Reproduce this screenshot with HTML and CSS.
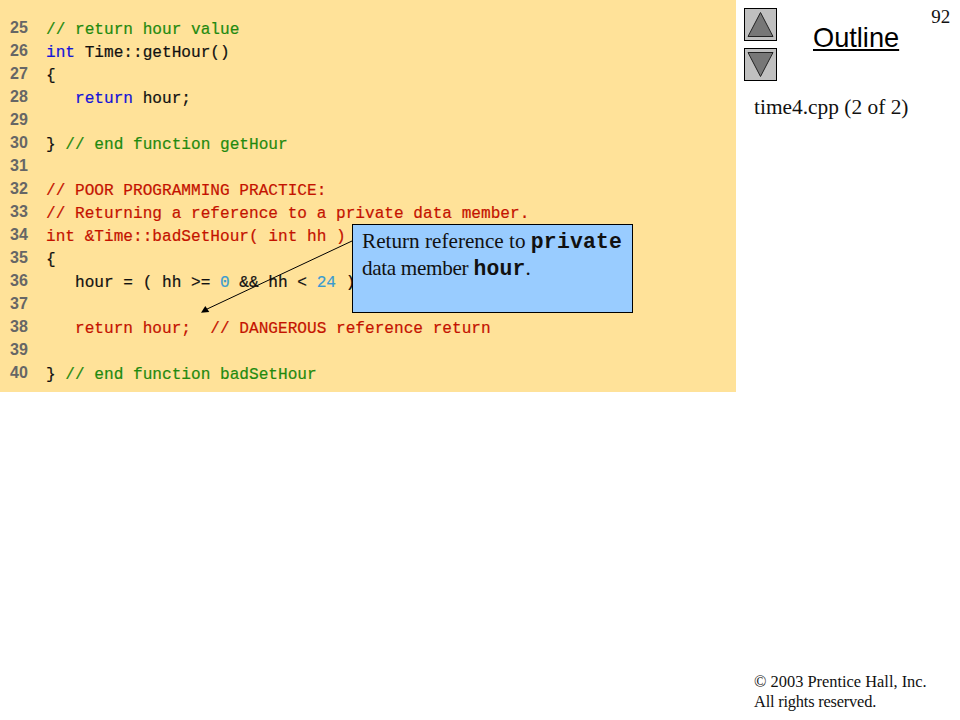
FILE: index.html
```html
<!DOCTYPE html>
<html lang="en">
<head>
<meta charset="utf-8">
<title>time4.cpp (2 of 2)</title>
<link rel="stylesheet" href="styles.css">
</head>
<body>
<div class="slide">
  <main class="panel">
    <div class="line"><span class="num">25</span><code class="c g">// return hour value</code></div>
    <div class="line"><span class="num">26</span><code class="c"><span class="b">int</span> Time::getHour()</code></div>
    <div class="line"><span class="num">27</span><code class="c">{</code></div>
    <div class="line"><span class="num">28</span><code class="c">   <span class="b">return</span> hour;</code></div>
    <div class="line"><span class="num">29</span><code class="c"></code></div>
    <div class="line"><span class="num">30</span><code class="c">} <span class="g">// end function getHour</span></code></div>
    <div class="line"><span class="num">31</span><code class="c"></code></div>
    <div class="line"><span class="num">32</span><code class="c r">// POOR PROGRAMMING PRACTICE:</code></div>
    <div class="line"><span class="num">33</span><code class="c r">// Returning a reference to a private data member.</code></div>
    <div class="line"><span class="num">34</span><code class="c r">int &amp;Time::badSetHour( int hh )</code></div>
    <div class="line"><span class="num">35</span><code class="c">{</code></div>
    <div class="line"><span class="num">36</span><code class="c">   hour = ( hh &gt;= <span class="n">0</span> &amp;&amp; hh &lt; <span class="n">24</span> )</code></div>
    <div class="line"><span class="num">37</span><code class="c"></code></div>
    <div class="line"><span class="num">38</span><code class="c r">   return hour;  // DANGEROUS reference return</code></div>
    <div class="line"><span class="num">39</span><code class="c"></code></div>
    <div class="line"><span class="num">40</span><code class="c">} <span class="g">// end function badSetHour</span></code></div>
    <svg class="arrow" width="160" height="80" viewBox="0 0 160 80" aria-hidden="true">
      <line x1="157" y1="3" x2="10" y2="72" stroke="#000" stroke-width="1"/>
      <polygon points="6,74.7 10.3,68 14.3,74" fill="#000"/>
    </svg>
    <aside class="callout">Return reference to <b class="m">private</b><br><span class="tight">data member</span> <b class="m">hour</b>.</aside>
  </main>
  <section class="side">
    <div class="top">
      <div class="nav">
        <svg class="btn" width="33" height="33" viewBox="0 0 33 33" aria-hidden="true">
          <rect x="0.5" y="0.5" width="32" height="32" fill="#c0c0c0" stroke="#000"/>
          <polygon points="16.5,4.5 29,28.5 4,28.5" fill="#777" stroke="#222"/>
        </svg>
        <svg class="btn" width="33" height="33" viewBox="0 0 33 33" aria-hidden="true">
          <rect x="0.5" y="0.5" width="32" height="32" fill="#c0c0c0" stroke="#000"/>
          <polygon points="16.5,28.5 4,4.5 29,4.5" fill="#777" stroke="#222"/>
        </svg>
      </div>
      <h1 class="title">Outline</h1>
      <span class="page">92</span>
    </div>
    <p class="file">time4.cpp (2 of 2)</p>
    <footer class="foot">© 2003 Prentice Hall, Inc.<br><span class="rights">All rights reserved.</span></footer>
  </section>
</div>
</body>
</html>
```

FILE: styles.css
```css
html, body {
  margin: 0;
  padding: 0;
  background: #fff;
}
.slide {
  display: flex;
  width: 960px;
  height: 720px;
  overflow: hidden;
  align-items: flex-start;
}
.panel {
  position: relative;
  box-sizing: border-box;
  width: 736px;
  height: 392px;
  flex: none;
  padding: 18px 0 0 10px;
  background: #ffe299;
}
.line {
  display: flex;
  align-items: center;
  height: 23.07px;
}
.num {
  width: 36px;
  flex: none;
  font: bold 16px "Liberation Sans", Arial, sans-serif;
  color: #666;
  position: relative;
  top: -2px;
}
.c {
  font-family: "Liberation Mono", "Courier New", monospace;
  font-size: 16.13px;
  white-space: pre;
  color: #111;
  -webkit-text-stroke: 0.2px currentColor;
}
.g { color: #1f8a0f; }
.b { color: #1414d8; }
.r { color: #c41200; }
.n { color: #3a9bd0; }
.arrow {
  position: absolute;
  left: 195px;
  top: 238px;
}
.callout {
  position: absolute;
  left: 352px;
  top: 224px;
  box-sizing: border-box;
  width: 281px;
  height: 89px;
  padding: 3px 0 0 9px;
  border: 1px solid #000;
  background: #99ccff;
  font: 21.2px/26px "Liberation Serif", "Times New Roman", serif;
  color: #111;
}
.m {
  font-family: "Liberation Mono", "Courier New", monospace;
  font-size: 21.4px;
  letter-spacing: 0.2px;
}
.tight { letter-spacing: -0.35px; }
.side {
  flex: 1;
  height: 720px;
  display: flex;
  flex-direction: column;
}
.top {
  display: flex;
  align-items: flex-start;
  height: 81px;
  padding: 8px 0 0 8px;
}
.nav {
  display: flex;
  flex-direction: column;
  gap: 7px;
  width: 33px;
  flex: none;
}
.btn { display: block; }
.title {
  margin: 13px 0 0 36px;
  font: normal 27.2px/34px "Liberation Sans", Arial, sans-serif;
  text-decoration: underline;
  color: #000;
}
.page {
  margin: -1px 0 0 32px;
  font: 19px/20px "Liberation Serif", "Times New Roman", serif;
  color: #111;
}
.file {
  margin: 6px 0 0 18px;
  font: 21.4px/24px "Liberation Serif", "Times New Roman", serif;
  color: #111;
}
.foot {
  margin: auto 0 8px 18px;
  font: 16.4px/20px "Liberation Serif", "Times New Roman", serif;
  color: #111;
}
.rights { letter-spacing: -0.2px; }
```
